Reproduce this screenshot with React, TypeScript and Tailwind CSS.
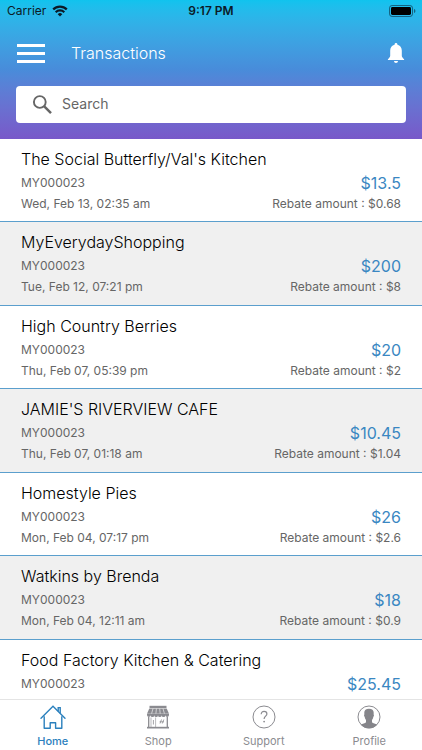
import { useState } from 'react'

const transactions = [
  { id: 1, name: "The Social Butterfly/Val's Kitchen", code: 'MY000023', date: 'Wed, Feb 13, 02:35 am', total: '$13.5', rebate: '$0.68' },
  { id: 2, name: 'MyEverydayShopping', code: 'MY000023', date: 'Tue, Feb 12, 07:21 pm', total: '$200', rebate: '$8' },
  { id: 3, name: 'High Country Berries', code: 'MY000023', date: 'Thu, Feb 07, 05:39 pm', total: '$20', rebate: '$2' },
  { id: 4, name: "JAMIE'S RIVERVIEW CAFE", code: 'MY000023', date: 'Thu, Feb 07, 01:18 am', total: '$10.45', rebate: '$1.04' },
  { id: 5, name: 'Homestyle Pies', code: 'MY000023', date: 'Mon, Feb 04, 07:17 pm', total: '$26', rebate: '$2.6' },
  { id: 6, name: 'Watkins by Brenda', code: 'MY000023', date: 'Mon, Feb 04, 12:11 am', total: '$18', rebate: '$0.9' },
  { id: 7, name: 'Food Factory Kitchen & Catering', code: 'MY000023', date: '', total: '$25.45', rebate: '' },
]

function WifiIcon() {
  return (
    <svg viewBox="0 0 16 12" className="w-4 h-3" aria-hidden="true">
      <g fill="none" stroke="#0b1a26" strokeWidth="2.200">
        <path d="M1.200 4.400a9.600 9.600 0 0 1 13.600 0" />
        <path d="M3.700 7.200a6.100 6.100 0 0 1 8.600 0" />
      </g>
      <path d="M8 11.400 5.700 9.200a3.300 3.300 0 0 1 4.600 0z" fill="#0b1a26" />
    </svg>
  )
}

function BatteryIcon() {
  return (
    <svg viewBox="0 0 27 12" className="w-[27px] h-3" aria-hidden="true">
      <rect x="0.5" y="0.5" width="23" height="11" rx="2.6" fill="none" stroke="#0b2a3a" strokeOpacity="0.6" />
      <rect x="2" y="2" width="20" height="8" rx="1.4" fill="#000" />
      <path d="M25 4v4c.9-.3 1.400-1.100 1.400-2s-.5-1.700-1.400-2z" fill="#0b2a3a" fillOpacity="0.6" />
    </svg>
  )
}

function HomeIcon() {
  return (
    <svg viewBox="0 0 26 24" className="w-[26px] h-6" fill="none" stroke="#2b80bd" strokeWidth="1.400" aria-hidden="true">
      <path d="M1 13.200 13 1.200l12 12" strokeLinecap="round" />
      <path d="M18.200 6.200V2.600h2v5.600" />
      <path d="M4.200 11.200v12h6v-5.400h5.400v5.400h6.200v-12" strokeLinejoin="round" />
    </svg>
  )
}

function ShopIcon() {
  return (
    <svg viewBox="0 0 24 24" className="size-6" aria-hidden="true">
      <path d="M3.500.8h17V3h-17z" fill="#8b8b90" />
      <path d="M3.300 3.500h17.400L23 8.800H1z" fill="#8b8b90" />
      <path d="M7 3.600 5.600 8.600M10.400 3.600 9.900 8.600M13.700 3.600l.5 5M17 3.600l1.400 5" stroke="#fff" strokeWidth=".6" />
      <path d="M1 9h22v.8a1.800 1.800 0 0 1-3.600.4 1.850 1.850 0 0 1-3.700 0 1.850 1.850 0 0 1-3.700 0 1.850 1.850 0 0 1-3.700 0 1.850 1.850 0 0 1-3.700 0A1.800 1.800 0 0 1 1 9.800z" fill="#8b8b90" />
      <path d="M2.700 11.500v11M21.300 11.500v11" stroke="#8b8b90" strokeWidth="1.300" />
      <path d="M5 12.500v9.500M9.600 12.500v9.500" stroke="#8b8b90" strokeWidth=".6" />
      <path d="M7.400 15v4.500M14 18.500l1.500-4M16.300 18.500l1.500-4M13.600 16.800h4.400" stroke="#8b8b90" strokeWidth=".8" />
      <path d="M1 21.800h22v1.700H1z" fill="#8b8b90" />
    </svg>
  )
}

function SupportIcon() {
  return (
    <svg viewBox="0 0 24 24" className="size-6" fill="none" stroke="#8b8b90" aria-hidden="true">
      <circle cx="12" cy="12" r="11" />
      <path d="M9.200 9.300c0-1.900 1.200-3 2.900-3s2.800 1.100 2.800 2.600c0 2.200-2.800 2.400-2.800 5.100" strokeWidth="1.200" />
      <circle cx="12.100" cy="16.600" r=".9" fill="#8b8b90" stroke="none" />
    </svg>
  )
}

function ProfileIcon() {
  return (
    <svg viewBox="0 0 24 24" className="size-6" aria-hidden="true">
      <circle cx="12" cy="12" r="11" fill="#fff" stroke="#8b8b90" />
      <path d="M12 3.800c3.200 0 4.900 1.700 4.700 4.500l-.1 1.200c.6.200.5 1.600-.3 2.500-.3 1.300-.6 2.200-1.300 2.900v2.400c.8 1.400 3.500 1.300 5.200 2.400a11 11 0 0 1-16.400 0c1.700-1.100 4.400-1 5.200-2.400v-2.400c-.7-.7-1-1.600-1.300-2.900-.8-.9-.9-2.300-.3-2.500l-.1-1.200c-.2-2.800 1.500-4.500 4.700-4.500z" fill="#85858a" />
    </svg>
  )
}

const tabs = [
  { name: 'Home', icon: HomeIcon },
  { name: 'Shop', icon: ShopIcon },
  { name: 'Support', icon: SupportIcon },
  { name: 'Profile', icon: ProfileIcon },
]

export default function App() {
  const [search, setSearch] = useState('')

  const filtered = transactions.filter(t => t.name.toLowerCase().includes(search.toLowerCase()))

  return (
    <div className="h-screen flex flex-col bg-white font-['Inter',sans-serif]">
      {/* Header */}
      <header className="shrink-0 bg-linear-to-b from-[#10c3ee] via-[#488cda] to-[#7858c9] pb-4">
        <div className="grid grid-cols-3 items-center h-[22px] px-1.5 text-xs text-[#0b1a26]">
          <div className="flex items-center gap-1.5 pl-px">
            <span>Carrier</span>
            <WifiIcon />
          </div>
          <span className="text-center font-semibold">9:17 PM</span>
          <div className="flex justify-end">
            <BatteryIcon />
          </div>
        </div>

        <div className="flex items-center h-[62px] px-[17px] mb-0.5">
          <button aria-label="Menu" className="flex flex-col gap-[5px] w-7">
            <span className="h-[3px] w-full bg-white" />
            <span className="h-[3px] w-full bg-white" />
            <span className="h-[3px] w-full bg-white" />
          </button>
          <h1 className="flex-1 pl-[26px] text-base font-light text-white">Transactions</h1>
          <button aria-label="Notifications">
            <svg viewBox="0 0 18 20" className="w-[18px] h-5" fill="#fff" aria-hidden="true">
              <path d="M9 0c.8 0 1.400.6 1.400 1.300v.4c2.700.6 4.400 2.900 4.400 5.700v5.400c0 1.400 1.200 2.400 2.300 3.500v.8H.9v-.8c1.100-1.100 2.300-2.100 2.300-3.500V7.400c0-2.800 1.700-5.100 4.400-5.700v-.4C7.600.6 8.200 0 9 0zM7 18h4c0 1.200-.9 2-2 2s-2-.8-2-2z" />
            </svg>
          </button>
        </div>

        {/* Search */}
        <label className="flex items-center h-[37px] mx-4 pl-4 bg-white rounded-sm">
          <svg viewBox="0 0 20 20" className="size-5" fill="none" stroke="#666" aria-hidden="true">
            <circle cx="7.800" cy="7" r="5.900" strokeWidth="1.900" />
            <path d="m12 11.200 7 7" strokeWidth="2.400" />
          </svg>
          <input
            type="text"
            aria-label="Search"
            placeholder="Search"
            value={search}
            onChange={e => setSearch(e.target.value)}
            className="flex-1 min-w-0 pl-2.5 pb-0.5 text-sm text-[#555] placeholder-[#666] focus:outline-none"
          />
        </label>
      </header>

      {/* Transactions */}
      <main className="flex-1 min-h-0 overflow-hidden">
        <ul>
          {filtered.map(t => (
            <li key={t.id} className="px-[21px] pt-2 odd:pb-2 even:pb-[9px] border-b border-[#5b9fcd] even:bg-[#f0f0f0]">
              <h2 className="text-base leading-6 font-light text-black">{t.name}</h2>
              <div className="flex items-center justify-between h-6">
                <span className="text-xs text-[#666]">{t.code}</span>
                <span className="text-base text-[#3a87c2]">{t.total}</span>
              </div>
              <div className="flex items-center justify-between h-[18px] text-xs text-[#666]">
                <span>{t.date}</span>
                {t.rebate && <span>Rebate amount : {t.rebate}</span>}
              </div>
            </li>
          ))}
        </ul>
      </main>

      {/* Tab bar */}
      <nav className="shrink-0 grid grid-cols-4 border-t border-[#e4e4e4] bg-white pt-[5px] h-[51px]">
        {tabs.map(tab => (
          <a
            key={tab.name}
            href="#"
            className={`flex flex-col items-center gap-1 text-[11px] leading-4 ${tab.name === 'Home' ? 'font-medium text-[#2b80bd]' : 'text-[#8b8b90]'}`}
          >
            <tab.icon />
            {tab.name}
          </a>
        ))}
      </nav>
    </div>
  )
}
